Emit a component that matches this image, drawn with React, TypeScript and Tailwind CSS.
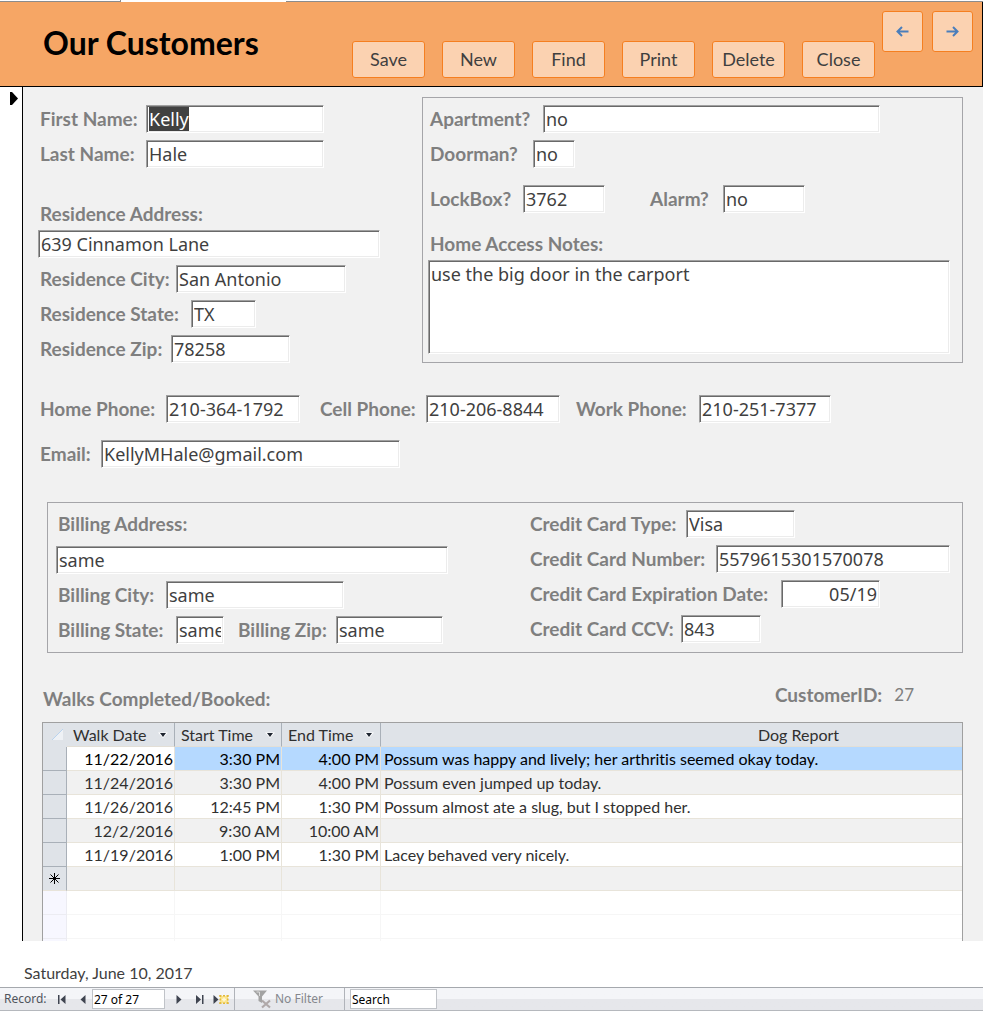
import { useEffect, useRef } from "react";

const actions = ["Save", "New", "Find", "Print", "Delete", "Close"];

const walks = [
  { date: "11/22/2016", start: "3:30 PM", end: "4:00 PM", report: "Possum was happy and lively; her arthritis seemed okay today." },
  { date: "11/24/2016", start: "3:30 PM", end: "4:00 PM", report: "Possum even jumped up today." },
  { date: "11/26/2016", start: "12:45 PM", end: "1:30 PM", report: "Possum almost ate a slug, but I stopped her." },
  { date: "12/2/2016", start: "9:30 AM", end: "10:00 AM", report: "" },
  { date: "11/19/2016", start: "1:00 PM", end: "1:30 PM", report: "Lacey behaved very nicely." },
];

const sunken =
  "border border-t-[#a0a0a0] border-l-[#a0a0a0] border-r-white border-b-white bg-white shadow-[inset_1px_1px_0_#696969,inset_-1px_-1px_0_#ececec] font-['Noto_Sans',sans-serif] text-[18px] leading-6 text-[#3f3f3f] outline-none";

const labelText = "text-[19px] leading-7 font-bold whitespace-nowrap text-[#7f7f7f]";

type FieldProps = {
  id: string;
  label: string;
  value: string;
  labelWidth: string;
  width: string;
  right?: boolean;
  selected?: boolean;
};

function Field({ id, label, value, labelWidth, width, right, selected }: FieldProps) {
  const ref = useRef<HTMLInputElement>(null);
  useEffect(() => {
    if (selected && ref.current) {
      ref.current.focus({ preventScroll: true });
      ref.current.select();
    }
  }, [selected]);
  return (
    <div className="flex h-7">
      <label htmlFor={id} className={`${labelText} ${labelWidth} shrink-0 pl-[2px]`}>
        {label}
      </label>
      <input
        ref={ref}
        id={id}
        type="text"
        defaultValue={value}
        className={`${sunken} ${width} h-7 px-[2px] selection:bg-[#3f3f3ffd] selection:text-white ${right ? "text-right" : "text-left"}`}
      />
    </div>
  );
}

function StackedField({ id, label, value, width }: { id: string; label: string; value: string; width: string }) {
  return (
    <div className="flex flex-col gap-[2px]">
      <label htmlFor={id} className={`${labelText} pl-[2px]`}>
        {label}
      </label>
      <input id={id} type="text" defaultValue={value} className={`${sunken} ${width} h-7 px-[2px]`} />
    </div>
  );
}

function Arrow({ back }: { back?: boolean }) {
  return (
    <svg width="13" height="11" viewBox="0 0 13 11" fill="none" stroke="#4a7ebb" strokeWidth="2" aria-hidden="true">
      {back ? <path d="M12.500 5.500H1.500M6 1 1.500 5.500 6 10" /> : <path d="M.5 5.500H11.500M7 1 11.500 5.500 7 10" />}
    </svg>
  );
}

function SortArrow() {
  return (
    <svg width="10" height="6" viewBox="0 0 10 6" className="shrink-0" aria-hidden="true">
      <path d="M0 .5H10L5 6Z" fill="#fff" />
      <path d="M2 1H8L5 5Z" fill="#1e2530" />
    </svg>
  );
}

function HeadCell({ text }: { text: string }) {
  return (
    <th scope="col" className="h-6 border-r border-b border-r-[#a9b0b8] border-b-[#e3dfd6] p-0 font-normal">
      <div className="flex items-center justify-between pr-[6px] pl-[6px]">
        {text}
        <SortArrow />
      </div>
    </th>
  );
}

const navButton = "flex h-5 items-center justify-center";

export default function App() {
  return (
    <div className="flex min-h-screen flex-col bg-white font-[Lato,Carlito,sans-serif] [font-variant-ligatures:none]">
      <div className="flex h-[2px]">
        <div className="w-[121px] border-r border-b border-[#8c8c8c]" />
        <div className="w-[165px]" />
        <div className="flex-1 border-b border-[#8c8c8c]" />
      </div>

      <header className="flex h-[85px] items-end border-r border-b border-black bg-[#f6a665] pr-[9px]">
        <h1 className="flex-1 self-start pt-[20px] pl-[43px] text-[32px] leading-[42px] font-bold whitespace-nowrap text-black">
          Our Customers
        </h1>
        <div className="flex gap-[17px] pb-[8px]">
          {actions.map((a) => (
            <button
              key={a}
              type="button"
              className="h-[37px] w-[73px] rounded-[3px] border border-[#f57f20] bg-[#fbd2b1] text-[18px] text-[#3f3f3f]"
            >
              {a}
            </button>
          ))}
        </div>
        <div className="ml-[7px] flex gap-[9px] self-start pt-[9px]">
          <button type="button" aria-label="Previous record" className="flex h-[41px] w-[41px] items-center justify-center rounded-[3px] border border-[#f57f20] bg-[#fbd2b1]">
            <Arrow back />
          </button>
          <button type="button" aria-label="Next record" className="flex h-[41px] w-[41px] items-center justify-center rounded-[3px] border border-[#f57f20] bg-[#fbd2b1]">
            <Arrow />
          </button>
        </div>
      </header>

      <div className="flex">
        <div className="flex w-[23px] shrink-0 justify-end border-r border-black pt-[5px] pr-[4px]">
          <svg width="8" height="13" viewBox="0 0 8 13" aria-hidden="true">
            <path d="M0 0 2 0 8 6.500 2 13H0Z" fill="#000" />
          </svg>
        </div>

        <main className="min-w-0 flex-1 bg-[#f1f1f1] pr-5 pl-[15px]">
          <section className="flex pt-[10px]">
            <div className="flex w-[384px] shrink-0 flex-col gap-[7px] pt-2">
              <Field id="first" label="First Name:" value="Kelly" labelWidth="w-[108px]" width="w-[178px]" selected />
              <Field id="last" label="Last Name:" value="Hale" labelWidth="w-[108px]" width="w-[178px]" />
              <div className="pt-[25px]">
                <StackedField id="address" label="Residence Address:" value="639 Cinnamon Lane" width="w-[342px]" />
              </div>
              <Field id="city" label="Residence City:" value="San Antonio" labelWidth="w-[138px]" width="w-[170px]" />
              <Field id="state" label="Residence State:" value="TX" labelWidth="w-[153px]" width="w-[65px]" />
              <Field id="zip" label="Residence Zip:" value="78258" labelWidth="w-[133px]" width="w-[119px]" />
            </div>
            <div className="flex flex-1 flex-col border border-[#a5a5a9] pt-[7px] pr-[12px] pb-2 pl-[5px]">
              <Field id="apartment" label="Apartment?" value="no" labelWidth="w-[115px]" width="w-[337px]" />
              <div className="pt-[7px]">
                <Field id="doorman" label="Doorman?" value="no" labelWidth="w-[105px]" width="w-[42px]" />
              </div>
              <div className="flex gap-[43px] pt-[17px]">
                <Field id="lockbox" label="LockBox?" value="3762" labelWidth="w-[95px]" width="w-[82px]" />
                <Field id="alarm" label="Alarm?" value="no" labelWidth="w-[75px]" width="w-[82px]" />
              </div>
              <label htmlFor="notes" className={`${labelText} mt-[17px] mb-[2px] pl-[2px]`}>
                Home Access Notes:
              </label>
              <textarea id="notes" defaultValue="use the big door in the carport" className={`${sunken} h-[94px] w-full resize-none px-[2px] py-px`} />
            </div>
          </section>

          <section className="flex gap-[14px] pt-8">
            <div className="pr-1">
              <Field id="home" label="Home Phone:" value="210-364-1792" labelWidth="w-[128px]" width="w-[134px]" />
            </div>
            <Field id="cell" label="Cell Phone:" value="210-206-8844" labelWidth="w-[108px]" width="w-[134px]" />
            <Field id="work" label="Work Phone:" value="210-251-7377" labelWidth="w-[125px]" width="w-[132px]" />
          </section>
          <div className="pt-[17px]">
            <Field id="email" label="Email:" value="KellyMHale@gmail.com" labelWidth="w-[63px]" width="w-[299px]" />
          </div>

          <section className="mt-[34px] ml-[9px] flex border border-[#a5a5a9] pt-[7px] pb-2 pl-2">
            <div className="flex w-[472px] shrink-0 flex-col gap-[7px]">
              <div className="flex flex-col gap-2">
                <label htmlFor="baddress" className={`${labelText} pl-[2px]`}>
                  Billing Address:
                </label>
                <input id="baddress" type="text" defaultValue="same" className={`${sunken} h-7 w-[392px] px-[2px]`} />
              </div>
              <Field id="bcity" label="Billing City:" value="same" labelWidth="w-[110px]" width="w-[178px]" />
              <div className="flex gap-[12px]">
                <Field id="bstate" label="Billing State:" value="same" labelWidth="w-[120px]" width="w-[48px]" />
                <Field id="bzip" label="Billing Zip:" value="same" labelWidth="w-[100px]" width="w-[107px]" />
              </div>
            </div>
            <div className="flex flex-col gap-[7px]">
              <Field id="cctype" label="Credit Card Type:" value="Visa" labelWidth="w-[158px]" width="w-[109px]" />
              <Field id="ccnum" label="Credit Card Number:" value="5579615301570078" labelWidth="w-[188px]" width="w-[234px]" />
              <Field id="ccexp" label="Credit Card Expiration Date:" value="05/19" labelWidth="w-[253px]" width="w-[99px]" right />
              <Field id="ccv" label="Credit Card CCV:" value="843" labelWidth="w-[153px]" width="w-[80px]" />
            </div>
          </section>

          <div className="flex items-start justify-between pt-7 pr-[49px] pl-[5px]">
            <h2 className={`${labelText} pt-1`}>Walks Completed/Booked:</h2>
            <div className="flex gap-3">
              <span className={labelText}>CustomerID:</span>
              <span className="text-[17px] leading-7 text-[#7f7f7f]">27</span>
            </div>
          </div>

          <div className="mt-[9px] ml-[4px] h-[219px] overflow-hidden border-x border-t border-[#a0a0a0] bg-white">
            <table className="w-full table-fixed border-separate border-spacing-0 text-[16px] leading-[23px] text-[#303030]">
              <colgroup>
                <col className="w-[24px]" />
                <col className="w-[108px]" />
                <col className="w-[107px]" />
                <col className="w-[99px]" />
                <col />
              </colgroup>
              <thead className="bg-[#dfe3e8] text-left">
                <tr>
                  <td className="h-6 border-b border-[#dfe3e8] p-0">
                    <svg width="11" height="11" viewBox="0 0 11 11" className="ml-[9px]" aria-hidden="true">
                      <path d="M11 0V11H0Z" fill="#eef1f5" />
                      <path d="M11 0 0 11" stroke="#b9d3ee" strokeWidth="1" />
                    </svg>
                  </td>
                  <HeadCell text="Walk Date" />
                  <HeadCell text="Start Time" />
                  <HeadCell text="End Time" />
                  <th scope="col" className="h-6 border-b border-[#e3dfd6] p-0 pl-[254px] text-center font-normal">
                    Dog Report
                  </th>
                </tr>
              </thead>
              <tbody>
                {walks.map((w, i) => {
                  const row = i === 0 ? "bg-[#b5d9ff] text-black" : i % 2 ? "bg-[#f1f1f1]" : "bg-white";
                  const cell = "h-6 border-r border-b border-[#e8e4da] p-0 pr-px text-right whitespace-nowrap";
                  return (
                    <tr key={w.date} className={row}>
                      <td className="h-6 border-r border-b border-[#a9b0b8] bg-[#dfe3e8] p-0" />
                      <td className={i === 0 ? `${cell} bg-white` : cell}>{w.date}</td>
                      <td className={cell}>{w.start}</td>
                      <td className={cell}>{w.end}</td>
                      <td className="h-6 border-b border-[#e8e4da] p-0 pl-[3px] whitespace-nowrap">{w.report}</td>
                    </tr>
                  );
                })}
                <tr className="bg-[#f1f1f1]">
                  <td className="h-6 border-r border-b border-[#a9b0b8] border-b-[#e8e4da] bg-[#dfe3e8] p-0">
                    <svg width="11" height="11" viewBox="0 0 11 11" className="mx-auto" stroke="#000" aria-hidden="true">
                      <path d="M5.500 0V11M0 5.500H11M1.500 1.500 9.500 9.500M9.500 1.500 1.500 9.500" />
                    </svg>
                  </td>
                  {[0, 1, 2].map((c) => (
                    <td key={c} className="h-6 border-r border-b border-[#e8e4da] p-0" />
                  ))}
                  <td className="h-6 border-b border-[#e8e4da] p-0" />
                </tr>
                {[0, 1, 2].map((r) => (
                  <tr key={r}>
                    <td className="h-6 border-r border-b border-[#ececf2] bg-[#f7f7ff] p-0" />
                    {[0, 1, 2].map((c) => (
                      <td key={c} className="h-6 border-r border-b border-[#f6f6f6] p-0" />
                    ))}
                    <td className="h-6 border-b border-[#f6f6f6] p-0" />
                  </tr>
                ))}
              </tbody>
            </table>
          </div>
        </main>
      </div>

      <p className="pt-5 pb-[2px] pl-6 text-[16px] leading-6 text-[#3f3f3f]">Saturday, June 10, 2017</p>

      <footer className="flex h-6 items-center border-y border-t-[#a5a8ad] border-b-[#b5b8bd] bg-linear-to-b from-[#f4f5f8] from-50% to-[#e6e7eb] to-50% pl-1 font-['Noto_Sans',sans-serif] text-[12px] text-[#50545c]">
        <label htmlFor="record" className="w-[50px] whitespace-nowrap">Record:</label>
        <button type="button" aria-label="First record" className={`${navButton} w-4`}>
          <svg width="8" height="9" viewBox="0 0 8 9" fill="#3f4450" aria-hidden="true">
            <path d="M0 0H1.500V9H0ZM7.500 0V9L2.500 4.500Z" />
          </svg>
        </button>
        <button type="button" aria-label="Previous" className={`${navButton} w-[22px] pl-1`}>
          <svg width="6" height="9" viewBox="0 0 6 9" fill="#3f4450" aria-hidden="true">
            <path d="M5.500 0V9L.5 4.500Z" />
          </svg>
        </button>
        <input id="record" type="text" defaultValue="27 of 27" className="h-5 w-[73px] border border-[#c0c3c8] bg-white px-px text-[12px] text-black" />
        <button type="button" aria-label="Next" className={`${navButton} w-[27px]`}>
          <svg width="6" height="9" viewBox="0 0 6 9" fill="#3f4450" aria-hidden="true">
            <path d="M.5 0V9L5.500 4.500Z" />
          </svg>
        </button>
        <button type="button" aria-label="Last record" className={`${navButton} w-[15px]`}>
          <svg width="8" height="9" viewBox="0 0 8 9" fill="#3f4450" aria-hidden="true">
            <path d="M6 0H7.500V9H6ZM0 0V9L5 4.500Z" />
          </svg>
        </button>
        <button type="button" aria-label="New record" className={`${navButton} w-[27px]`}>
          <svg width="16" height="9" viewBox="0 0 16 9" aria-hidden="true">
            <path d="M.5 0V9L5.500 4.500Z" fill="#3f4450" />
            <rect x="7" y="1" width="8" height="7" fill="#fbe48c" />
            <path d="M6.500 .8H15.500M6.500 8.200H15.500" stroke="#e2b93b" strokeWidth="1.500" strokeDasharray="2 1.500" />
            <path d="M7.200 0V9M14.800 0V9" stroke="#e2b93b" strokeWidth="1.500" strokeDasharray="2 1.500" />
            <path d="M11 2.500V6.500M9 4.500H13" stroke="#fff8d8" strokeWidth="1.500" />
          </svg>
        </button>
        <div className="flex h-full w-[111px] items-center border-x border-[#b0b3b9] pl-[17px]">
          <button type="button" className="flex items-center gap-[3px] whitespace-nowrap text-[#85878d]">
            <svg width="20" height="19" viewBox="0 0 20 19" aria-hidden="true">
              <path d="M1 .5H15L10 6.500V13L6.500 11V6.500Z" fill="#a3a3a3" />
              <path d="M4.500 2H7.500V6" stroke="#dedede" fill="none" />
              <path d="M10 10.500 18 17.500M18 10.500 10 17.500" stroke="#b0a8a8" strokeWidth="2.200" />
            </svg>
            No Filter
          </button>
        </div>
        <input aria-label="Search" type="text" defaultValue="Search" className="ml-[5px] h-5 w-[87px] border border-[#c0c3c8] bg-white px-px text-[12px] text-black" />
      </footer>
    </div>
  );
}
